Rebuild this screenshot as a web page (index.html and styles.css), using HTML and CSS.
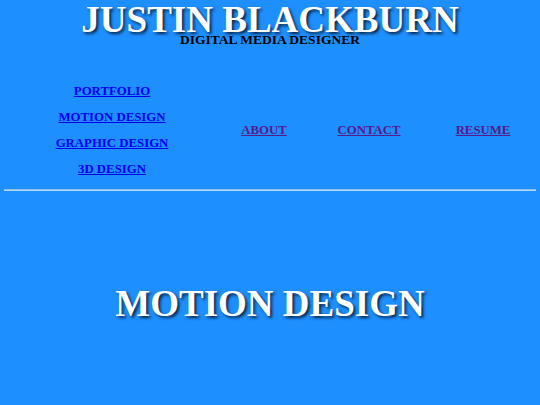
FILE: index.html
```html
<!DOCTYPE html>
<html>
<head>
<meta charset="utf-8">
<link rel="stylesheet" href="styles.css">
</head>
<body>
<header class="masthead">
  <h1 class="name">JUSTIN BLACKBURN</h1>
  <p class="tagline">DIGITAL MEDIA DESIGNER</p>
</header>
<nav class="nav">
  <ul class="work">
    <li><a class="link" href="#">PORTFOLIO</a></li>
    <li><a class="link" href="#">MOTION DESIGN</a></li>
    <li><a class="link" href="#">GRAPHIC DESIGN</a></li>
    <li><a class="link" href="#">3D DESIGN</a></li>
  </ul>
  <a class="link visited about" href="#">ABOUT</a>
  <a class="link visited contact" href="#">CONTACT</a>
  <a class="link visited resume" href="#">RESUME</a>
</nav>
<hr class="rule">
<main class="content">
  <h2 class="title">MOTION DESIGN</h2>
</main>
</body>
</html>
```
FILE: styles.css
```css
html, body {
  margin: 0;
  padding: 0;
}
body {
  background: #1e8fff;
  font-family: "Liberation Serif", "Times New Roman", serif;
  font-weight: bold;
  width: 540px;
  height: 405px;
  overflow: hidden;
}
.masthead {
  text-align: center;
}
.name {
  margin: 0;
  padding-top: 1px;
  font-size: 37px;
  line-height: 38px;
  color: #fff;
  text-shadow: 2px 2px 3px rgba(0, 0, 0, 0.75);
}
.tagline {
  margin: -6px 0 0;
  font-size: 13.5px;
  line-height: 13px;
  color: #000;
}
.nav {
  display: grid;
  grid-template-columns: 224px 80px 130px 98px;
  align-items: center;
  margin-top: 38px;
  text-align: center;
  font-size: 12.8px;
}
.work {
  list-style: none;
  margin: 0;
  padding: 0;
  display: flex;
  flex-direction: column;
  gap: 11px;
}
.work li {
  line-height: 15px;
}
.link {
  color: #0000ee;
  text-decoration: underline;
}
.visited {
  color: #551a8b;
}
.rule {
  margin: 12px 4px 0;
  border: 0;
  border-top: 1px solid #8fbfe6;
  border-bottom: 1px solid #b4d8f5;
  height: 0;
}
.content {
  text-align: center;
}
.title {
  margin: 91px 0 0;
  font-size: 37px;
  line-height: 44px;
  color: #fff;
  text-shadow: 2px 2px 3px rgba(0, 0, 0, 0.75);
}
```
